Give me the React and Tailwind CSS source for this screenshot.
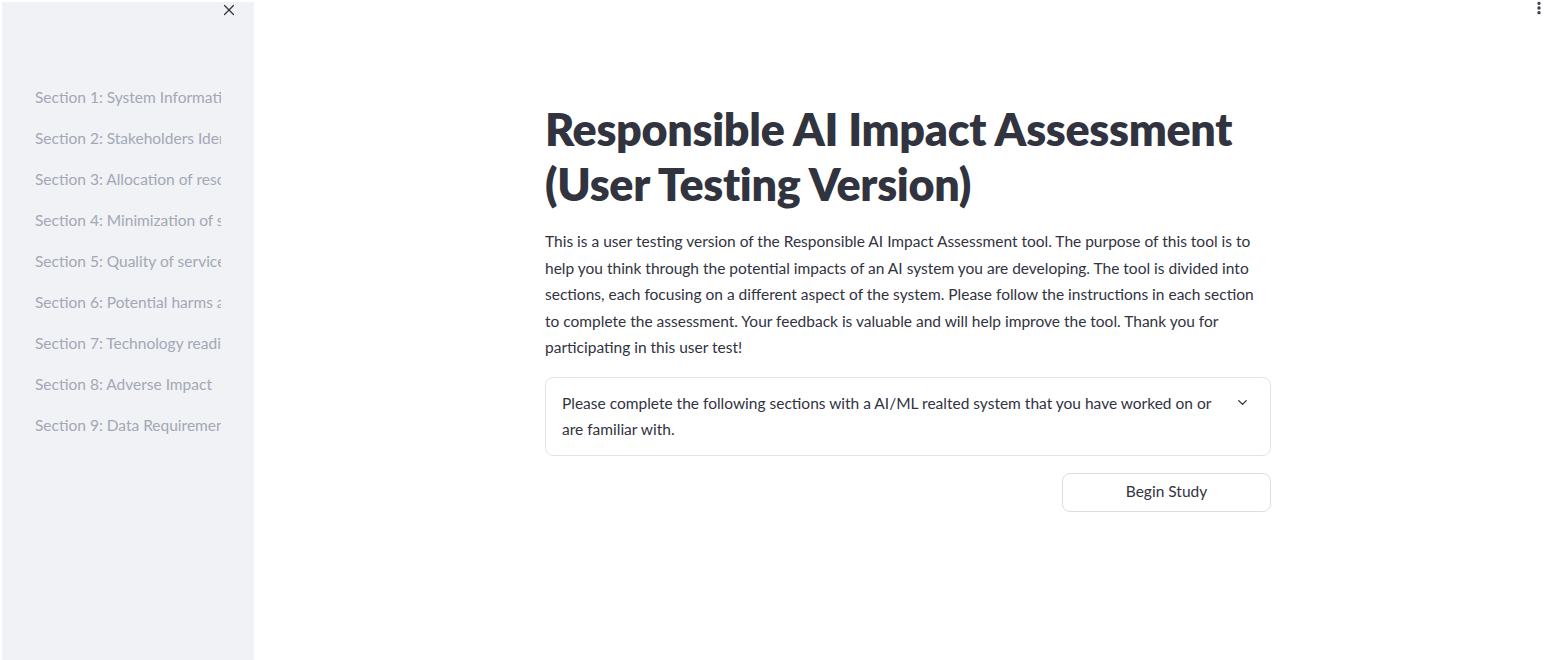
import { X, ChevronDown, EllipsisVertical } from 'lucide-react';

const sections = [
  'Section 1: System Information',
  'Section 2: Stakeholders Identification',
  'Section 3: Allocation of resources',
  'Section 4: Minimization of stereotyping',
  'Section 5: Quality of service',
  'Section 6: Potential harms and impacts',
  'Section 7: Technology readiness',
  'Section 8: Adverse Impact',
  'Section 9: Data Requirements',
];

export default function App() {
  return (
    <div
      className="flex h-[660px] w-[1548px] overflow-hidden bg-white text-[#31333f]"
      style={{ fontFamily: 'Lato, "Noto Sans", sans-serif' }}
    >
      {/* sidebar */}
      <aside className="relative ml-[2px] mt-[2px] w-[252px] shrink-0 bg-[#f0f2f6]">
        <button className="absolute right-[16px] top-[-1px] text-[#31333f]">
          <X className="h-[18px] w-[18px]" strokeWidth={1.6} />
        </button>
        <nav className="flex flex-col gap-[20px] pt-[85px] pl-[33px]">
          {sections.map((s) => (
            <div
              key={s}
              className="w-[186px] overflow-hidden whitespace-nowrap text-[15.5px] leading-[21px] text-[#a3a8b4]"
            >
              {s}
            </div>
          ))}
        </nav>
      </aside>

      {/* main */}
      <main className="relative flex-1">
        <button className="absolute right-[1px] top-0 text-[#31333f]">
          <EllipsisVertical className="h-[16px] w-[16px]" strokeWidth={3} />
        </button>
        <div className="ml-[291px] w-[726px] pt-[102px]">
          <h1 className="text-[44.8px] font-extrabold leading-[55px] tracking-[-0.3px]">
            Responsible AI Impact Assessment
            <br />
            (User Testing Version)
          </h1>
          <p className="mt-[16px] text-[15.5px] leading-[26.5px]">
            This is a user testing version of the Responsible AI Impact Assessment tool. The purpose of this tool is to
            help you think through the potential impacts of an AI system you are developing. The tool is divided into
            sections, each focusing on a different aspect of the system. Please follow the instructions in each section
            to complete the assessment. Your feedback is valuable and will help improve the tool. Thank you for
            participating in this user test!
          </p>
          <div className="mt-[16px] flex items-start justify-between rounded-lg border border-[#e1e3e8] py-[12px] pl-[16px] pr-[20px]">
            <div className="w-[660px] text-[15.5px] leading-[26.5px]">
              Please complete the following sections with a AI/ML realted system that you have worked on or are
              familiar with.
            </div>
            <ChevronDown className="mt-[5px] h-[15px] w-[15px]" strokeWidth={2.2} />
          </div>
          <div className="mt-[17px] flex justify-end">
            <button className="h-[39px] w-[209px] rounded-lg border border-[#dcdee3] bg-white text-[15.5px]">
              Begin Study
            </button>
          </div>
        </div>
      </main>
    </div>
  );
}
